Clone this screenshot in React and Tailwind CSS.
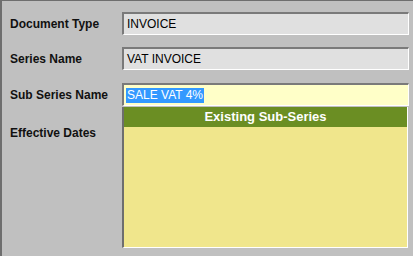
const Field = ({ value, tone = "gray", selected = false }) => (
    <div
        className={`h-[23px] w-[287px] flex items-center pl-[2px] border-t-2 border-l-2 border-b border-r border-t-[#7a7a7a] border-l-[#7a7a7a] border-b-white border-r-white ${
            tone === "yellow" ? "bg-[#ffffc8]" : "bg-[#e0e0e0]"
        }`}
    >
        {selected ? (
            <span className="bg-[#3399ff] text-white leading-[15px] px-[1px]">{value}</span>
        ) : (
            <span className="px-[1px]">{value}</span>
        )}
    </div>
)

const Label = ({ children }) => (
    <div className="w-[120px] pl-[8px] font-bold text-[12px] text-[#111]">{children}</div>
)

export default function App() {
    return (
        <div
            className="w-[413px] h-[256px] bg-[#c0c0c0] border-t border-l-2 border-[#6e6e6e] text-[12px] text-black overflow-hidden"
            style={{ fontFamily: '"Liberation Sans", Arial, sans-serif' }}
        >
            <div className="flex flex-col pt-[11px] gap-[12px]">
                <div className="flex items-center">
                    <Label>Document Type</Label>
                    <Field value="INVOICE" />
                </div>
                <div className="flex items-center">
                    <Label>Series Name</Label>
                    <Field value="VAT INVOICE" />
                </div>
            </div>

            <div className="flex items-center mt-[13px]">
                <Label>Sub Series Name</Label>
                <Field value="SALE VAT 4%" tone="yellow" selected />
            </div>

            <div className="flex mt-[1px]">
                <Label>
                    <div className="pt-[17px]">Effective Dates</div>
                </Label>
                <div className="w-[286px] h-[141px] bg-[#f0e68c] border-l-2 border-l-[#6e6e6e] border-b border-r border-b-white border-r-white flex flex-col">
                    <div className="h-[20px] bg-[#6b8e23] text-white font-bold text-[13px] flex items-center justify-center">
                        Existing Sub-Series
                    </div>
                </div>
            </div>
        </div>
    )
}
